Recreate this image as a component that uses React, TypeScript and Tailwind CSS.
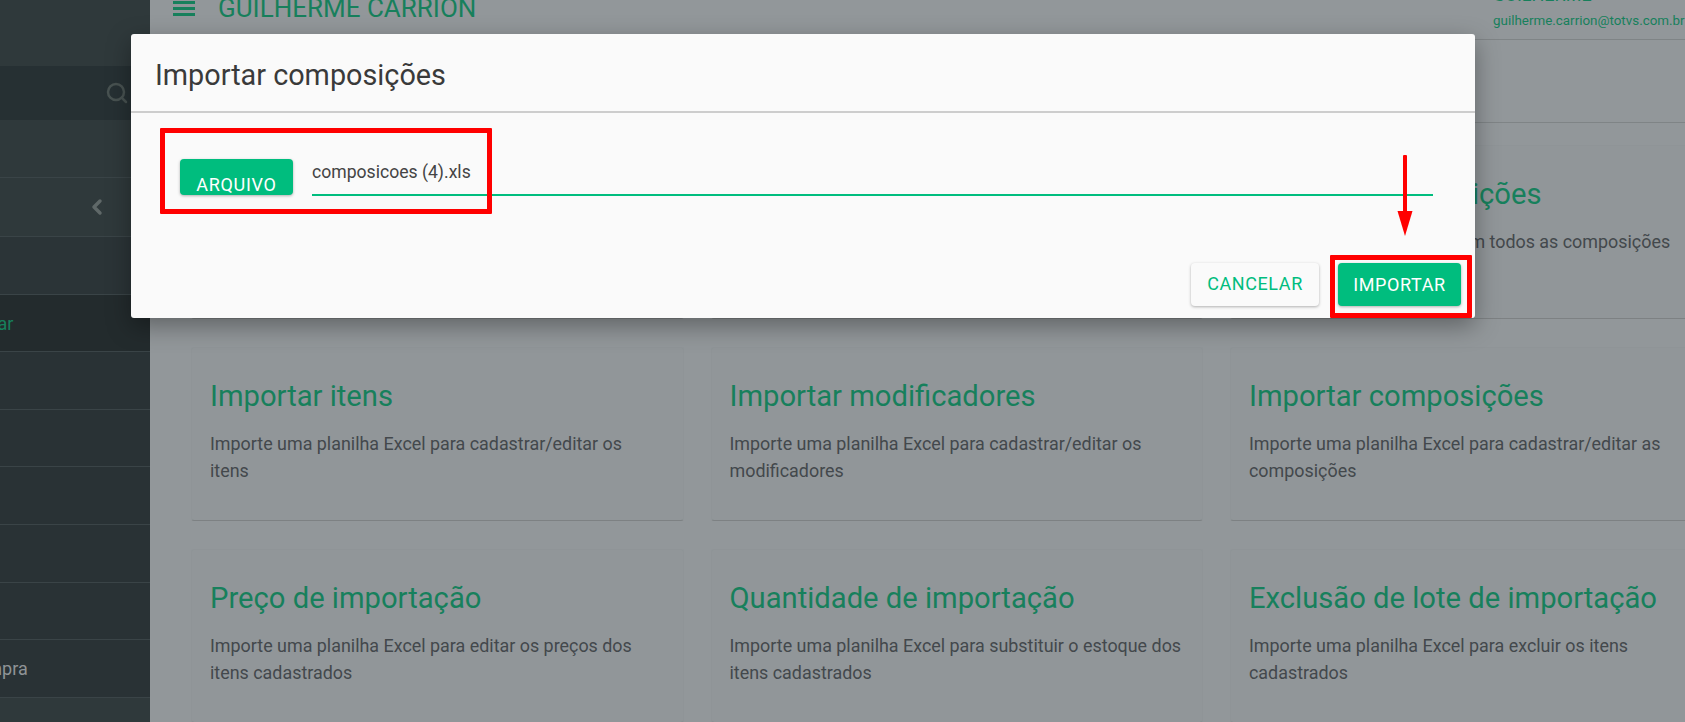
import { ChevronLeft, Search } from 'lucide-react';

const cards = [
  { title: 'Exportar itens', text: 'Baixe uma planilha Excel com todos os itens' },
  { title: 'Exportar modificadores', text: 'Baixe uma planilha Excel com todos os modificadores' },
  { title: 'Exportar composições', text: 'Baixe uma planilha Excel com todos as composições' },
  { title: 'Importar itens', text: 'Importe uma planilha Excel para cadastrar/editar os itens' },
  { title: 'Importar modificadores', text: 'Importe uma planilha Excel para cadastrar/editar os modificadores' },
  { title: 'Importar composições', text: 'Importe uma planilha Excel para cadastrar/editar as composições' },
  { title: 'Preço de importação', text: 'Importe uma planilha Excel para editar os preços dos itens cadastrados' },
  { title: 'Quantidade de importação', text: 'Importe uma planilha Excel para substituir o estoque dos itens cadastrados' },
  { title: 'Exclusão de lote de importação', text: 'Importe uma planilha Excel para excluir os itens cadastrados' },
];

const sideRows = ['', '', '', '', '', 'Pedidos de compra'];

function Sidebar() {
  return (
    <aside className="w-[150px] h-full shrink-0 bg-[#293235] flex flex-col overflow-hidden">
      <div className="h-[66px] shrink-0 bg-[#2f393b]" />
      <div className="h-[54px] shrink-0 bg-[#263033] flex items-center justify-end pr-[21px]">
        <Search size={24} strokeWidth={2.5} className="text-[#485251]" />
      </div>
      <div className="h-[58px] shrink-0 bg-[#2f393b] border-b border-[#3a4447]" />
      <div className="h-[59px] shrink-0 bg-[#2f393b] border-b border-[#3a4447] flex items-center pl-[85px]">
        <ChevronLeft size={24} strokeWidth={3.5} className="text-[#5f6868]" />
      </div>
      <div className="h-[58px] shrink-0 bg-[#2b3437] border-b border-[#3a4447]" />
      <div className="h-[57px] shrink-0 bg-[#232b2d] border-b border-[#3a4447] flex items-center">
        <span className="text-[#17805c] text-[18px] whitespace-nowrap -ml-[56px]">Importar</span>
      </div>
      {sideRows.map((label, i) => (
        <div key={i} className="h-[57.7px] shrink-0 border-b border-[#3a4447] flex items-center">
          {label && <span className="text-[#8f9496] text-[18px] whitespace-nowrap -ml-[127px]">{label}</span>}
        </div>
      ))}
      <div className="flex-1 bg-[#2f393b]" />
    </aside>
  );
}

function Card({ title, text }: { title: string; text: string }) {
  return (
    <div className="h-[174px] rounded-[3px] bg-[#919699] border border-[#8f9497] border-b-[#7d8183] pl-[18px] pt-[28px]">
      <h2 className="text-[#17805c] text-[29.2px] leading-[40px] whitespace-nowrap">{title}</h2>
      <p className="mt-[14px] w-[452.5px] text-[#43484c] text-[17.9px] leading-[27px]">{text}</p>
    </div>
  );
}

function ImportDialog() {
  return (
    <div className="absolute left-[131px] top-[34px] w-[1344px] h-[284px] rounded-[3px] bg-[#fafafa] shadow-[0_8px_24px_rgba(0,0,0,0.35)] flex flex-col">
      <div className="h-[79px] shrink-0 border-b-2 border-[#cdcdcd] pl-[24px] pt-[21px]">
        <h1 className="text-[#3a3a3a] text-[28.8px] leading-[40px]">Importar composições</h1>
      </div>
      <div className="flex items-start pl-[49px] pr-[42px] pt-[46px]">
        <div className="w-[113px] h-[36px] rounded-[4px] bg-[#00bd7e] shadow-[0_1px_3px_rgba(0,0,0,0.3)] text-white text-[18px] tracking-[0.7px] text-center pt-[14px] leading-[24px] overflow-hidden">
          ARQUIVO
        </div>
        <div className="ml-[19px] flex-1 h-[37px] border-b-2 border-[#00bd7e] text-[#444] text-[17.6px] leading-[26px]">
          composicoes (4).xls
        </div>
      </div>
      <div className="mt-auto flex justify-end gap-[19px] pr-[14px] pb-[12px]">
        <button className="w-[128px] h-[43px] rounded-[4px] bg-[#fafafa] shadow-[0_1px_3px_rgba(0,0,0,0.3)] text-[#00bd7e] text-[18px] tracking-[0.6px] pb-[2px]">
          CANCELAR
        </button>
        <button className="w-[123px] h-[43px] rounded-[4px] bg-[#00bd7e] shadow-[0_1px_3px_rgba(0,0,0,0.3)] text-white text-[18px] tracking-[0.6px] pb-[1px]">
          IMPORTAR
        </button>
      </div>
    </div>
  );
}

export default function App() {
  return (
    <div className="relative w-[1685px] h-[722px] overflow-hidden bg-[#92979a] flex font-['Roboto',sans-serif]">
      <Sidebar />
      <main className="flex-1 min-w-0 overflow-hidden">
        <header className="h-[40px] border-b border-[#7f8486] relative overflow-hidden">
          <div className="absolute left-[23px] top-[1px] w-[22px] flex flex-col gap-[3.5px]">
            <span className="h-[2.5px] bg-[#17805c]" />
            <span className="h-[2.5px] bg-[#17805c]" />
            <span className="h-[2.5px] bg-[#17805c]" />
          </div>
          <div className="absolute left-[68px] -top-[6px] text-[#17805c] text-[26px] leading-[28px] whitespace-nowrap">
            GUILHERME CARRION
          </div>
          <div className="absolute left-[1343px] -top-[15px] text-[#17805c] whitespace-nowrap">
            <div className="text-[18px] leading-[20px]">GUILHERME</div>
            <div className="text-[13.4px] leading-[20px] mt-[6px]">guilherme.carrion@totvs.com.br</div>
          </div>
        </header>
        <div className="h-[83px] border-b border-[#7f8486]" />
        <div className="grid grid-cols-[repeat(3,492.5px)] gap-x-[27px] gap-y-[28px] pl-[41px] pt-[22px]">
          {cards.map((card) => (
            <Card key={card.title} {...card} />
          ))}
        </div>
      </main>

      <ImportDialog />

      <div className="absolute left-[160px] top-[128px] w-[332px] h-[86px] border-[5px] border-[#ff0000] rounded-[1px]" />
      <div className="absolute left-[1330px] top-[255px] w-[142px] h-[63px] border-[5px] border-[#ff0000] rounded-[1px]" />
      <svg className="absolute left-[1397px] top-[155px]" width="16" height="82" viewBox="0 0 16 82">
        <rect x="6" y="0" width="4" height="58" rx="1" fill="#ff0000" />
        <path d="M0.5 56 H15.5 L8 81 Z" fill="#ff0000" />
      </svg>
    </div>
  );
}
